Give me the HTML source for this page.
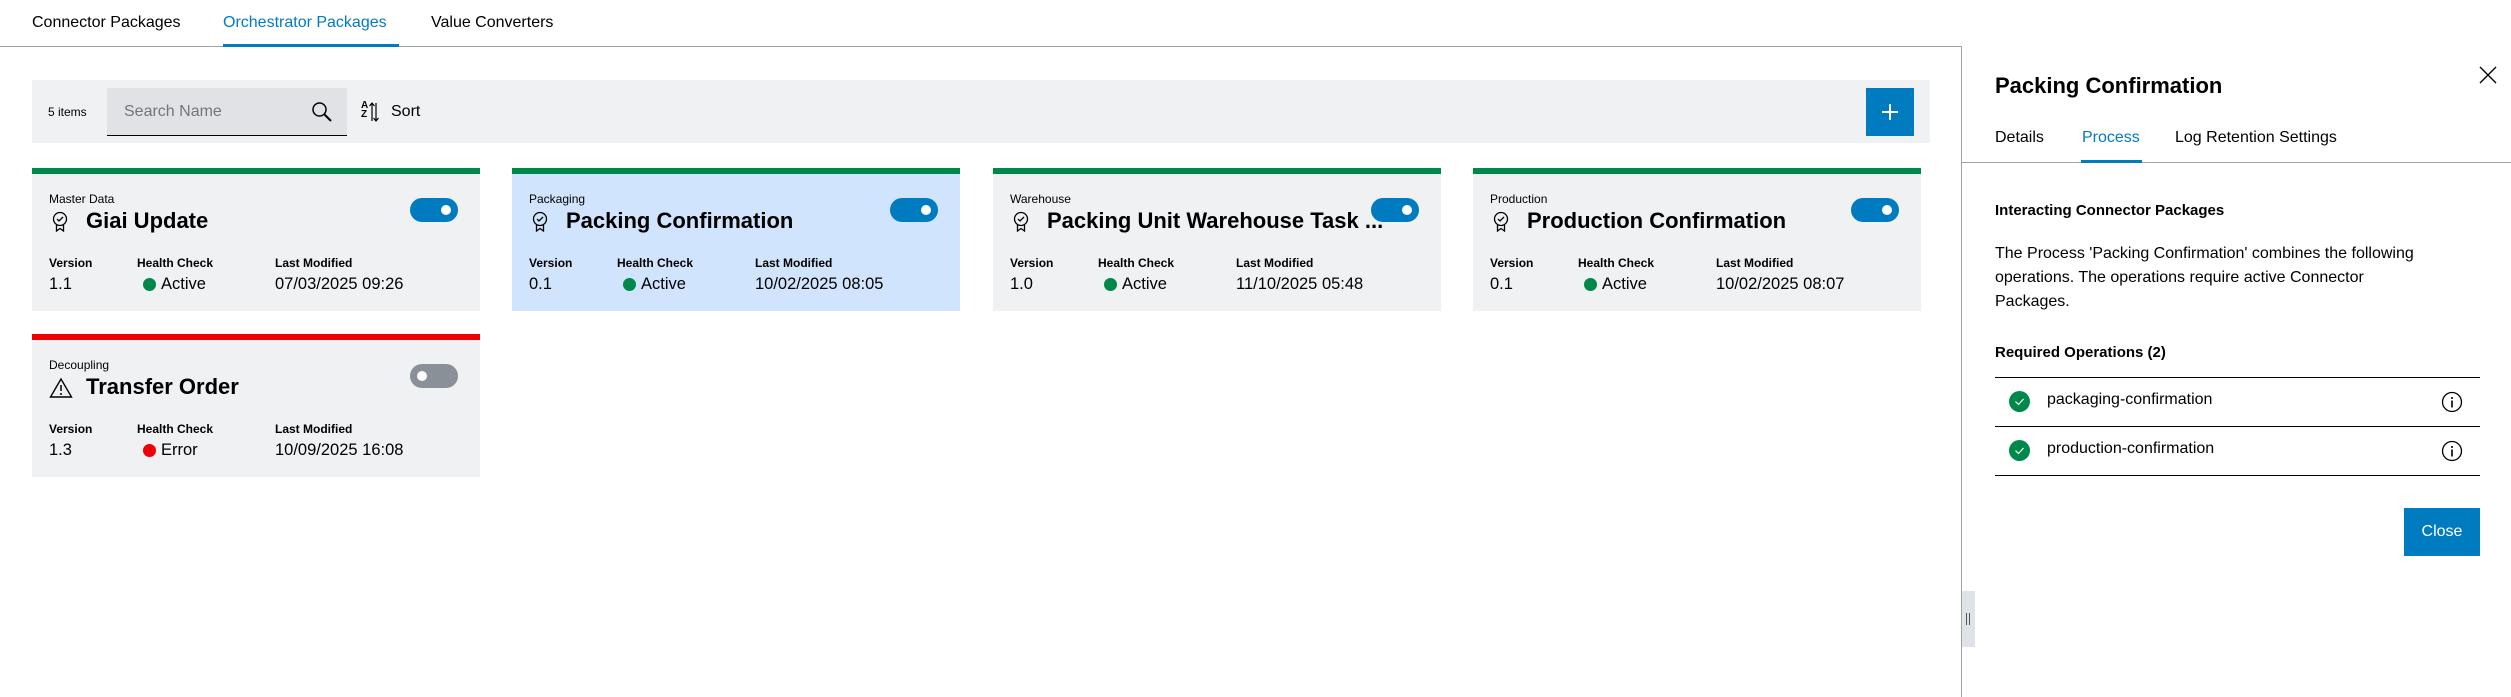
<!DOCTYPE html>
<html><head><meta charset="utf-8"><style>
*{margin:0;padding:0;box-sizing:border-box}
body{width:2511px;height:697px;background:#fff;font-family:"Liberation Sans",sans-serif;color:#000;position:relative;overflow:hidden}
.a{position:absolute;white-space:nowrap}
.tab{font-size:16px;top:14px}
.card{position:absolute;width:448px;height:143px;background:#eff1f2;border-top:6px solid #00884a}
.card .cat{position:absolute;left:17px;top:18px;font-size:12px}
.card .ttl{position:absolute;left:54px;top:34px;font-size:22px;font-weight:bold}
.card .ic{position:absolute;left:20px;top:37px}
.tg{position:absolute;left:378px;top:24px;width:48px;height:24px;border-radius:12px;background:#007bc0}
.tg:after{content:"";position:absolute;right:7px;top:7px;width:10px;height:10px;border-radius:5px;background:#fff}
.tg.off{background:#8a9097}
.tg.off:after{left:7px;right:auto}
.lb{position:absolute;top:82px;font-size:12px;font-weight:bold}
.vl{position:absolute;top:101px;font-size:16.5px}
.dot{position:absolute;left:111px;top:104px;width:13px;height:13px;border-radius:7px;background:#00884a}
</style></head><body>
<div class="a tab" style="left:32px">Connector Packages</div>
<div class="a tab" style="left:223px;color:#007bc0">Orchestrator Packages</div>
<div class="a tab" style="left:431px">Value Converters</div>
<div class="a" style="left:0;top:46px;width:1962px;height:1px;background:#a0a4a8"></div>
<div class="a" style="left:223px;top:44px;width:176px;height:3px;background:#007bc0"></div>

<div class="a" style="left:32px;top:80px;width:1898px;height:63px;background:#eff1f2"></div>
<div class="a" style="left:48px;top:105px;font-size:12px">5 items</div>
<div class="a" style="left:107px;top:88px;width:240px;height:48px;background:#e0e2e5;border-bottom:1px solid #000"></div>
<div class="a" style="left:124px;top:103px;font-size:16px;color:#71767c">Search Name</div>
<svg class="a" style="left:311px;top:101px" width="22" height="22" viewBox="0 0 22 22"><circle cx="8.5" cy="8.5" r="6.5" fill="none" stroke="#000" stroke-width="1.5"/><path d="M13 13l7 7" stroke="#000" stroke-width="2"/></svg>
<div class="a" style="left:361px;top:101px;font-size:10px;line-height:9px;font-weight:bold">A<br>Z</div>
<svg class="a" style="left:369px;top:101px" width="10" height="22" viewBox="0 0 10 22"><path d="M3 20V2M0.5 5L3 2 5.5 5M7 2v18M4.5 17L7 20 9.5 17" fill="none" stroke="#000" stroke-width="1.2"/></svg>
<div class="a" style="left:391px;top:103px;font-size:16px">Sort</div>
<div class="a" style="left:1866px;top:88px;width:48px;height:48px;background:#007bc0"></div>
<div class="a" style="left:1882px;top:111px;width:16px;height:2px;background:#fff"></div>
<div class="a" style="left:1889px;top:104px;width:2px;height:16px;background:#fff"></div>

<div class="card" style="left:32px;top:168px">
<div class="cat">Master Data</div>
<svg class="ic" width="16" height="22" viewBox="0 0 16 22"><circle cx="8" cy="8" r="6.5" fill="none" stroke="#000" stroke-width="1.3"/><path d="M5 8l2 2 4-4M4.5 13.5V20l3.5-2.5 3.5 2.5v-6.5" fill="none" stroke="#000" stroke-width="1.3"/></svg>
<div class="ttl">Giai Update</div><div class="tg"></div>
<div class="lb" style="left:17px">Version</div><div class="lb" style="left:105px">Health Check</div><div class="lb" style="left:243px">Last Modified</div>
<div class="vl" style="left:17px">1.1</div><div class="dot"></div><div class="vl" style="left:129px">Active</div><div class="vl" style="left:243px">07/03/2025 09:26</div>
</div>
<div class="card" style="left:512px;top:168px;background:#d1e4fd">
<div class="cat">Packaging</div>
<svg class="ic" width="16" height="22" viewBox="0 0 16 22"><circle cx="8" cy="8" r="6.5" fill="none" stroke="#000" stroke-width="1.3"/><path d="M5 8l2 2 4-4M4.5 13.5V20l3.5-2.5 3.5 2.5v-6.5" fill="none" stroke="#000" stroke-width="1.3"/></svg>
<div class="ttl">Packing Confirmation</div><div class="tg"></div>
<div class="lb" style="left:17px">Version</div><div class="lb" style="left:105px">Health Check</div><div class="lb" style="left:243px">Last Modified</div>
<div class="vl" style="left:17px">0.1</div><div class="dot"></div><div class="vl" style="left:129px">Active</div><div class="vl" style="left:243px">10/02/2025 08:05</div>
</div>
<div class="card" style="left:993px;top:168px">
<div class="cat">Warehouse</div>
<svg class="ic" width="16" height="22" viewBox="0 0 16 22"><circle cx="8" cy="8" r="6.5" fill="none" stroke="#000" stroke-width="1.3"/><path d="M5 8l2 2 4-4M4.5 13.5V20l3.5-2.5 3.5 2.5v-6.5" fill="none" stroke="#000" stroke-width="1.3"/></svg>
<div class="ttl">Packing Unit Warehouse Task ...</div><div class="tg"></div>
<div class="lb" style="left:17px">Version</div><div class="lb" style="left:105px">Health Check</div><div class="lb" style="left:243px">Last Modified</div>
<div class="vl" style="left:17px">1.0</div><div class="dot"></div><div class="vl" style="left:129px">Active</div><div class="vl" style="left:243px">11/10/2025 05:48</div>
</div>
<div class="card" style="left:1473px;top:168px">
<div class="cat">Production</div>
<svg class="ic" width="16" height="22" viewBox="0 0 16 22"><circle cx="8" cy="8" r="6.5" fill="none" stroke="#000" stroke-width="1.3"/><path d="M5 8l2 2 4-4M4.5 13.5V20l3.5-2.5 3.5 2.5v-6.5" fill="none" stroke="#000" stroke-width="1.3"/></svg>
<div class="ttl">Production Confirmation</div><div class="tg"></div>
<div class="lb" style="left:17px">Version</div><div class="lb" style="left:105px">Health Check</div><div class="lb" style="left:243px">Last Modified</div>
<div class="vl" style="left:17px">0.1</div><div class="dot"></div><div class="vl" style="left:129px">Active</div><div class="vl" style="left:243px">10/02/2025 08:07</div>
</div>
<div class="card" style="left:32px;top:334px;border-top-color:#ed0007">
<div class="cat">Decoupling</div>
<svg class="ic" width="24" height="22" viewBox="0 0 24 22" style="left:17px"><path d="M12 2L22.5 20H1.5Z" fill="none" stroke="#000" stroke-width="1.4"/><path d="M12 8v6M12 16v2" stroke="#000" stroke-width="1.5"/></svg>
<div class="ttl">Transfer Order</div><div class="tg off"></div>
<div class="lb" style="left:17px">Version</div><div class="lb" style="left:105px">Health Check</div><div class="lb" style="left:243px">Last Modified</div>
<div class="vl" style="left:17px">1.3</div><div class="dot" style="background:#ed0007"></div><div class="vl" style="left:129px">Error</div><div class="vl" style="left:243px">10/09/2025 16:08</div>
</div>

<div class="a" style="left:1961px;top:46px;width:1px;height:651px;background:#a0a4a8"></div>
<div class="a" style="left:1962px;top:591px;width:13px;height:56px;background:#dfe2e6"></div>
<div class="a" style="left:1966px;top:613px;width:1px;height:12px;background:#555"></div>
<div class="a" style="left:1969px;top:613px;width:1px;height:12px;background:#555"></div>
<div class="a" style="left:1995px;top:73px;font-size:22px;font-weight:bold">Packing Confirmation</div>
<svg class="a" style="left:2479px;top:66px" width="18" height="18" viewBox="0 0 18 18"><path d="M1 1l16 16M17 1L1 17" stroke="#000" stroke-width="1.4"/></svg>
<div class="a" style="left:1995px;top:129px;font-size:16px">Details</div>
<div class="a" style="left:2082px;top:129px;font-size:16px;color:#007bc0">Process</div>
<div class="a" style="left:2175px;top:129px;font-size:16px">Log Retention Settings</div>
<div class="a" style="left:1962px;top:162px;width:549px;height:1px;background:#a0a4a8"></div>
<div class="a" style="left:2081px;top:160px;width:61px;height:3px;background:#007bc0"></div>
<div class="a" style="left:1995px;top:202px;font-size:15px;font-weight:bold">Interacting Connector Packages</div>
<div class="a" style="left:1995px;top:242px;font-size:16px;line-height:24px;white-space:normal;width:440px">The Process 'Packing Confirmation' combines the following operations. The operations require active Connector Packages.</div>
<div class="a" style="left:1995px;top:344px;font-size:15px;font-weight:bold">Required Operations (2)</div>
<div class="a" style="left:1995px;top:377px;width:485px;height:1px;background:#000"></div>
<div class="a" style="left:1995px;top:426px;width:485px;height:1px;background:#000"></div>
<div class="a" style="left:1995px;top:475px;width:485px;height:1px;background:#000"></div>
<svg class="a" style="left:2009px;top:391px" width="21" height="21" viewBox="0 0 21 21"><circle cx="10.5" cy="10.5" r="10.5" fill="#00884a"/><path d="M6.5 10.5l3 3 5-5.5" fill="none" stroke="#fff" stroke-width="1.2"/></svg>
<svg class="a" style="left:2009px;top:440px" width="21" height="21" viewBox="0 0 21 21"><circle cx="10.5" cy="10.5" r="10.5" fill="#00884a"/><path d="M6.5 10.5l3 3 5-5.5" fill="none" stroke="#fff" stroke-width="1.2"/></svg>
<div class="a" style="left:2047px;top:391px;font-size:16px">packaging-confirmation</div>
<div class="a" style="left:2047px;top:440px;font-size:16px">production-confirmation</div>
<svg class="a" style="left:2441px;top:391px" width="22" height="22" viewBox="0 0 22 22"><circle cx="11" cy="11" r="9.5" fill="none" stroke="#000" stroke-width="1.3"/><path d="M11 9.5v7M11 6v2" stroke="#000" stroke-width="1.6"/></svg>
<svg class="a" style="left:2441px;top:440px" width="22" height="22" viewBox="0 0 22 22"><circle cx="11" cy="11" r="9.5" fill="none" stroke="#000" stroke-width="1.3"/><path d="M11 9.5v7M11 6v2" stroke="#000" stroke-width="1.6"/></svg>
<div class="a" style="left:2404px;top:508px;width:76px;height:48px;background:#007bc0;color:#fff;font-size:16px;text-align:center;line-height:48px">Close</div>
</body></html>
